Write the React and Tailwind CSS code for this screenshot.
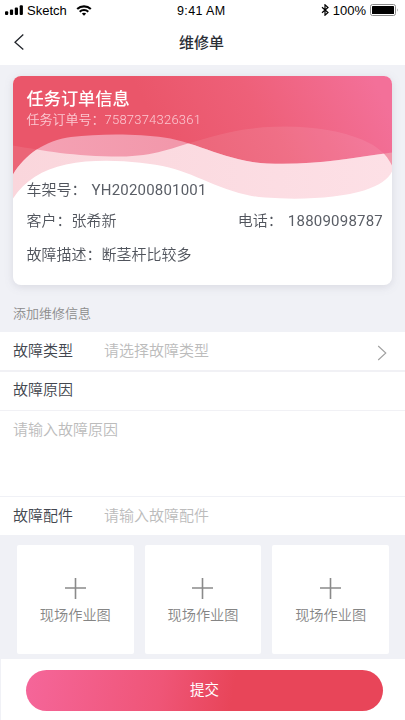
import React from "react";

const LATIN = "font-['Roboto','Noto_Sans_CJK_SC',sans-serif]";

function StatusBar() {
  return (
    <div className="flex h-5 items-center justify-between pl-[5px] pr-[6px] font-['Liberation_Sans',sans-serif] text-[13px] leading-5 text-black">
      <div className="flex w-[120px] items-center">
        <svg className="h-[10px] w-[19px]" viewBox="0 0 19 10">
          <rect x="0" y="6.2" width="3.2" height="3.8" rx="1" />
          <rect x="4.9" y="4.6" width="3.2" height="5.4" rx="1" />
          <rect x="9.8" y="2.6" width="3.2" height="7.4" rx="1" />
          <rect x="14.7" y="0.2" width="3.2" height="9.8" rx="1" />
        </svg>
        <span className="ml-[3px] translate-y-px">Sketch</span>
        <svg className="ml-[9px] h-[11px] w-[16px]" viewBox="0 0 16 11">
          <path d="M1.2 4.1C5 .4 11 .4 14.8 4.1" fill="none" stroke="#000" strokeWidth="2.1" />
          <path d="M3.7 6.7c2.4-2.3 6.2-2.3 8.6 0" fill="none" stroke="#000" strokeWidth="2" />
          <path d="M5.8 8.5c1.3-1.1 3.1-1.1 4.4 0L8 10.800Z" />
        </svg>
      </div>
      <span className="w-[50px] translate-y-px whitespace-nowrap text-[12.5px] tracking-[0.4px]">9:41 AM</span>
      <div className="flex w-[120px] items-center justify-end">
        <svg className="h-[12px] w-[8px]" viewBox="0 0 8 12" fill="none" stroke="#000" strokeWidth="1.2">
          <path d="M1 3.2 7 8.5 4 11.2V.8L7 3.500 1 8.8" />
        </svg>
        <span className="ml-[4px] mr-[4px] translate-y-px">100%</span>
        <svg className="h-[12px] w-[29px]" viewBox="0 0 29 12">
          <rect x=".5" y=".5" width="25" height="11" rx="2" fill="#fff" stroke="#8c8c8c" />
          <rect x="2" y="2" width="22" height="8" rx=".6" />
          <path d="M27 4.2q1.6 1.8 0 3.6Z" fill="#8c8c8c" />
        </svg>
      </div>
    </div>
  );
}

function NavBar() {
  return (
    <div className="grid h-[45px] grid-cols-[60px_1fr_60px] items-center">
      <svg className="ml-[13px] h-[18px] w-[12px] -translate-y-px" viewBox="0 0 12 18" fill="none" stroke="#22252b" strokeWidth="1.3">
        <path d="M10.300 1.500 2 9.2l8.300 7.400" />
      </svg>
      <h1 className="-translate-x-px -translate-y-px text-center text-[15px] font-medium leading-[22px] text-[#2a2e35]">维修单</h1>
    </div>
  );
}

const ARCH =
  "M13 174C25 154 45 140 71 136.500C99 133 137 133 164 137C198 142 227 161 267 163C313 165 347 158 392 152V212H13Z";
const SWELL =
  "M13 145C43 150 73 156 120 156C155 156 172 147 202 139C231 130 256 126 285 126C316 126 342 131 362 139C378 146 386 153 392 165V212H13Z";
const SHEET =
  "M13 198C25 180 42 169 66 164C99 157 143 161 169 167C198 174 229 195 265 197C303 200 341 197 364 190C379 185 388 179 392 171V212H13Z";

function CardArt() {
  return (
    <svg className="absolute inset-x-0 top-0 h-[135px] w-full" viewBox="13 75.500 379 135" preserveAspectRatio="none">
      <defs>
        <linearGradient id="rose" gradientUnits="userSpaceOnUse" x1="170" y1="155" x2="365" y2="60">
          <stop offset="0" stopColor="#ea566a" />
          <stop offset=".45" stopColor="#ee6079" />
          <stop offset="1" stopColor="#f37099" />
        </linearGradient>
        <linearGradient id="blush" x1="0" y1="0" x2="1" y2="0">
          <stop offset="0" stopColor="#fad6dc" />
          <stop offset="1" stopColor="#fde0e6" />
        </linearGradient>
        <linearGradient id="veil" x1="0" y1="0" x2="1" y2="0">
          <stop offset="0" stopColor="#f5a3b5" />
          <stop offset=".42" stopColor="#f298ab" />
          <stop offset="1" stopColor="#f298ab" />
        </linearGradient>
        <clipPath id="swell">
          <path d={SWELL} />
        </clipPath>
      </defs>
      <rect x="13" y="75" width="379" height="137" fill="url(#rose)" />
      <path d={SWELL} fill="#fff" fillOpacity=".09" />
      <path d={ARCH} fill="url(#veil)" />
      <path d={ARCH} fill="url(#blush)" clipPath="url(#swell)" />
      <path d={SHEET} fill="#fff" />
    </svg>
  );
}

function OrderCard() {
  return (
    <section className="relative mx-[13px] mt-[10.5px] h-[209.5px] overflow-hidden rounded-[8px] bg-white pl-[13.5px] pr-[9px] text-[15px] text-[#50545c] font-[350]">
      <CardArt />
      <div className="relative">
        <h2 className="pt-[11px] text-[17.2px] font-medium leading-[22px] text-white">任务订单信息</h2>
        <p className="text-[13px] leading-[20px] text-[#fbc9d2]">
          任务订单号：<span className={`${LATIN} font-light tracking-[0.22px]`}>7587374326361</span>
        </p>
        <p className="mt-[48px] leading-[22px]">
          车架号：<span className={`${LATIN} ml-[5px] font-normal tracking-[0.2px] text-[#5a5e66]`}>YH20200801001</span>
        </p>
        <div className="mt-[8.500px] flex justify-between leading-[22px]">
          <span>客户：张希新</span>
          <span>
            电话：<span className={`${LATIN} ml-[5px] font-normal tracking-[0.22px] text-[#5a5e66]`}>18809098787</span>
          </span>
        </div>
        <p className="mt-[10.500px] leading-[22px]">故障描述：断茎杆比较多</p>
      </div>
    </section>
  );
}

function Field({ label, hint, children }) {
  return (
    <div className="flex h-[38px] items-center px-[13px] pb-[2px] text-[15px]">
      <span className="w-[91px] font-[350] text-[#43474f]">{label}</span>
      <span className="flex-1 font-[350] text-[#bcbcbc]">{hint}</span>
      {children}
    </div>
  );
}

function RepairForm() {
  return (
    <section className="bg-white">
      <Field label="故障类型" hint="请选择故障类型">
        <svg className="mr-[5px] mt-[5px] h-[16px] w-[10px]" viewBox="0 0 10 16" fill="none" stroke="#a0a0a0" strokeWidth="1.1">
          <path d="M1.200 1 8.800 8 1.200 15" />
        </svg>
      </Field>
      <div className="h-[1.500px] bg-[#f1f1f5]" />
      <Field label="故障原因" />
      <div className="h-px bg-[#f1f1f5]" />
      <p className="h-[85.500px] px-[13px] pt-[7px] text-[15px] font-[350] leading-[22px] text-[#bcbcbc]">请输入故障原因</p>
      <div className="h-px bg-[#f0f1f6]" />
      <Field label="故障配件" hint="请输入故障配件" />
    </section>
  );
}

function PhotoSlot() {
  return (
    <button className="flex h-[109px] flex-col items-center rounded-[2px] bg-white pt-[33px] text-[14.2px] font-[350] text-[#858585]">
      <svg className="h-[21px] w-[21px]" viewBox="0 0 21 21" stroke="#8a8a8a" strokeWidth="1.6">
        <path d="M10.500 0v21M0 10h21" />
      </svg>
      <span className="mt-[5px] leading-[20px]">现场作业图</span>
    </button>
  );
}

export default function App() {
  return (
    <div className="flex h-[720px] w-[405px] flex-col overflow-hidden bg-[#f0f1f6] font-['Noto_Sans_CJK_SC',sans-serif]">
      <header className="h-[65px] shrink-0 bg-white">
        <StatusBar />
        <NavBar />
      </header>
      <div className="drop-shadow-[0_2px_4px_rgba(60,60,90,0.13)]">
        <OrderCard />
      </div>
      <h3 className="mt-[17px] h-[30px] pl-[13px] text-[13px] font-[350] leading-[22px] text-[#8c8c8c]">添加维修信息</h3>
      <RepairForm />
      <div className="ml-[17px] mr-[16px] mt-[10px] grid grid-cols-3 gap-[11px]">
        <PhotoSlot />
        <PhotoSlot />
        <PhotoSlot />
      </div>
      <footer className="ml-px mt-auto h-[61px] bg-white pl-[25px] pr-[22px] pt-[10.500px]">
        <button className="block h-[41px] w-full rounded-full bg-linear-[100deg,#f5669a_0%,#ef5577_38%,#e84559_58%,#e84559_100%] pb-[4px] text-[14.5px] leading-[37px] text-white">
          提交
        </button>
      </footer>
    </div>
  );
}
